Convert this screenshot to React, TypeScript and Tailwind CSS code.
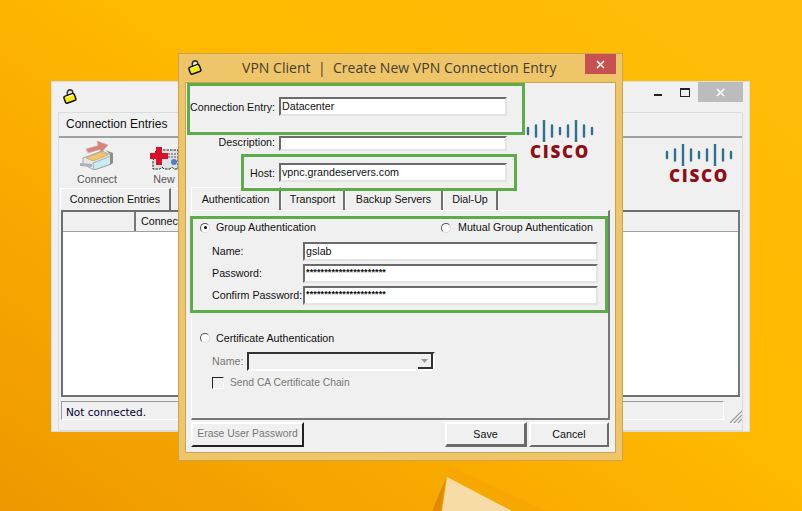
import React from "react";

const ui = "font-['Liberation_Sans',Arial,sans-serif] text-[10.7px] leading-none text-[#111] whitespace-nowrap";

function Lock() {
  return (
    <svg width="14" height="15" viewBox="0 0 14 15" className="shrink-0">
      <path d="M4.6 7 L4.2 3.8 Q4.6 1 7 0.8 Q9.4 0.8 9.8 3.4 L10.2 6" fill="#e8e8d8" stroke="#333" strokeWidth="1.5" />
      <rect x="1.4" y="5.6" width="11" height="7.4" rx="1.8" transform="rotate(-20 7 9.3)" fill="#f6ec14" stroke="#111" strokeWidth="1.5" />
      <path d="M3.4 8.2 L9.8 5.8" stroke="#fffbb0" strokeWidth="1.2" />
    </svg>
  );
}

function CiscoBars() {
  const h = [6, 11, 21, 11, 6, 11, 21, 11, 6];
  return (
    <svg width="68" height="22" viewBox="0 0 68 22">
      {h.map((v, i) => (
        <line key={i} x1={2 + i * 8} x2={2 + i * 8} y1={11 - v / 2} y2={11 + v / 2} stroke="#33708f" strokeWidth="2.4" strokeLinecap="round" />
      ))}
    </svg>
  );
}

function Cisco({ className = "" }: { className?: string }) {
  return (
    <div className={"flex w-[68px] flex-col items-center " + className}>
      <CiscoBars />
      <div className="mt-[1px] font-['Open_Sans',sans-serif] text-[17px] font-extrabold leading-[18px] tracking-[1.7px] text-[#8f0e16]">CISCO</div>
    </div>
  );
}

function ConnectIcon() {
  return (
    <svg width="34" height="30" viewBox="0 0 34 30">
      <path d="M6 9 L18 5.5 L17 1 L28 5 L21 13 L20 9.5 L8 13Z" fill="#d9827c" stroke="#c4b4b0" strokeWidth="0.6" />
      <path d="M3 18 L22 11 L31 15 L31 24 L14 30 L3 24Z" fill="#e6e6e6" stroke="#8a8a8a" strokeWidth="0.7" />
      <path d="M6 18 L21 12 L28 15 L13 21Z" fill="#f2c56d" stroke="#b09050" strokeWidth="0.5" />
      <path d="M13 23 L31 16 L31 24 L14 30Z" fill="#c8ecf2" stroke="#8a8a8a" strokeWidth="0.6" />
      <path d="M0 23 L12 24 L12 27 L0 26Z" fill="#b0b0bc" />
      <path d="M25 10 L33 13 L33 23 L30 25 L30 14Z" fill="#8f8f80" />
    </svg>
  );
}

function NewIcon() {
  return (
    <svg width="28" height="26" viewBox="0 0 28 26">
      <path d="M6 3 H28 V22 H24 Q22 19 20 22 H14 Q12 19 10 22 H3 V14Z" fill="#dfe3e6" stroke="#222" strokeWidth="1" strokeDasharray="2.5 1" />
      <path d="M15 7 H27 M15 10 H27" stroke="#555" strokeWidth="1" strokeDasharray="2 1" />
      <circle cx="24" cy="15" r="3" fill="#4f7fc4" />
      <path d="M6 0 H12 V6 H18 V12 H12 V18 H6 V12 H0 V6 H6Z" fill="#dc0f2a" />
    </svg>
  );
}

function Input({ value, className = "", mono = false }: { value?: string; className?: string; mono?: boolean }) {
  return (
    <div className={"flex items-center border-2 border-t-[#6b6b6b] border-l-[#6b6b6b] border-r-[#e4e4e4] border-b-[#e4e4e4] bg-white pl-[1px] " + className}>
      {mono ? <span className="-mt-[3px] text-[9px] font-bold leading-none tracking-[0.13px]">{value}</span> : value}
    </div>
  );
}

function Radio({ checked = false }: { checked?: boolean }) {
  return (
    <span className="relative block h-[10px] w-[10px] shrink-0 rounded-full border border-t-[#555] border-l-[#555] border-r-[#ddd] border-b-[#ddd] bg-white">
      {checked && <span className="absolute left-[2.5px] top-[2.5px] h-[3px] w-[3px] rounded-full bg-black" />}
    </span>
  );
}

function Tab({ label, active = false, w }: { label: string; active?: boolean; w: string }) {
  return (
    <div className={"flex items-center justify-center border-l border-t border-white border-r-2 border-r-[#6f6f6f] " + w + (active ? " -mt-[1px] h-[23px] bg-[#f0f0f0]" : " h-[22px]")}>
      {label}
    </div>
  );
}

function FieldRow({ label, value, mono = false }: { label: string; value: string; mono?: boolean }) {
  return (
    <div className="flex h-[19px] items-center">
      <div className="w-[91px]">{label}</div>
      <Input value={value} mono={mono} className="h-[19px] w-[295px]" />
    </div>
  );
}

function Btn({ label, className = "" }: { label: string; className?: string }) {
  return (
    <div className={"flex h-[25px] items-center justify-center border-2 border-t-white border-l-white border-r-[#6a6a6a] border-b-[#6a6a6a] " + className}>
      {label}
    </div>
  );
}

export default function App() {
  const stars = "**********************";
  return (
    <div className={"relative h-[511px] w-[802px] overflow-hidden bg-[linear-gradient(35deg,#ee9800_0%,#f8a900_30%,#ffb900_55%,#ffbd0a_100%)] " + ui}>
      {/* wallpaper fold */}
      <svg width="802" height="511" viewBox="0 0 802 511" className="absolute left-0 top-0">
        <path d="M449 466 L546 511 H436Z" fill="#f6a800" />
        <path d="M447 477 L512 511 H442Z" fill="#f8dca8" />
        <path d="M432 511 L446 478 L441 511Z" fill="#e08a00" />
      </svg>

      {/* back window */}
      <div className="absolute left-[51px] top-[81px] flex h-[351px] w-[699px] flex-col border border-[#dcdcdc] bg-[#f0f0f0]">
        <div className="flex h-[30px] shrink-0 items-start">
          <div className="ml-[11px] mt-[7px]"><Lock /></div>
          <div className="ml-auto mr-[6px] flex items-start">
            <span className="mr-[18px] mt-[12px] h-[2px] w-[8px] bg-[#222]" />
            <span className="mr-[8px] mt-[6px] h-[9px] w-[10px] border border-t-2 border-[#222]" />
            <span className="flex h-[20px] w-[45px] items-center justify-center bg-[#bcbcbc]">
              <svg width="9" height="9" viewBox="0 0 9 9"><path d="M1 1 L8 8 M8 1 L1 8" stroke="#fff" strokeWidth="1.6" /></svg>
            </span>
          </div>
        </div>
        <div className="mx-[6px] flex flex-1 flex-col border border-[#dcdcdc]">
          <div className="flex h-[25px] shrink-0 items-center border-b-[2px] border-[#a0a0a0] pb-[2px] pl-[7px] text-[12px]">Connection Entries</div>
          <div className="flex h-[50px] shrink-0 items-start justify-between pl-[13px] pr-[9px]">
            <div className="flex gap-[26px]">
              <div className="flex w-[50px] flex-col items-center pt-[2px] text-[#555]">
                <ConnectIcon />
                <span className="mt-[4px]">Connect</span>
              </div>
              <div className="flex w-[32px] flex-col items-center pt-[9px] text-[#555]">
                <NewIcon />
                <span className="mt-[1px]">New</span>
              </div>
            </div>
            <Cisco className="mt-[6px]" />
          </div>
          <div className="flex h-[22px] shrink-0 pl-[1px]">
            <div className="flex w-[111px] items-center justify-center border-l border-t border-white border-r-2 border-r-[#6f6f6f]">Connection Entries</div>
            <div className="w-[40px] border-r-2 border-t border-white border-r-[#6f6f6f]" />
          </div>
          <div className="mx-[2px] flex h-[187px] shrink-0 flex-col border-2 border-[#6f6f6f] border-r-[#777] bg-white">
            <div className="flex h-[20px] shrink-0 border-b border-[#a0a0a0] bg-[#f0f0f0]">
              <div className="w-[73px] border-r-2 border-[#777]" />
              <div className="flex flex-1 items-center pl-[5px]">Connection Entry</div>
            </div>
          </div>
          <div className="mt-[4px] flex h-[19px] pl-[2px]">
            <div className="flex flex-1 items-center border border-t-[#9a9a9a] border-l-[#9a9a9a] border-r-white border-b-white pl-[4px] pt-[3px] font-['DejaVu_Sans',sans-serif] text-[10.5px] text-[#000033]">Not connected.</div>
            <div className="relative w-[18px]">
              <svg width="13" height="13" viewBox="0 0 13 13" className="absolute bottom-[-3px] right-[0px]">
                <path d="M1 13 L13 1 M5 13 L13 5 M9 13 L13 9" stroke="#9a9a9a" strokeWidth="1.2" />
              </svg>
            </div>
          </div>
        </div>
      </div>

      {/* front dialog */}
      <div className="absolute left-[178px] top-[53px] flex h-[408px] w-[445px] flex-col border border-[#c9a253] bg-[#efc569]">
        <div className="relative flex h-[28px] shrink-0 items-start">
          <div className="ml-[9px] mt-[6px]"><Lock /></div>
          <div className="absolute left-[63px] top-[6px] whitespace-nowrap font-['Open_Sans',sans-serif] text-[14px] leading-[16px] tracking-[0.03px] text-[#463e2c]">VPN Client &nbsp;|&nbsp; Create New VPN Connection Entry</div>
          <div className="absolute right-[6px] top-0 flex h-[20px] w-[31px] items-center justify-center bg-[#c75050]">
            <svg width="9" height="9" viewBox="0 0 9 9"><path d="M1 1 L8 8 M8 1 L1 8" stroke="#fff" strokeWidth="1.6" /></svg>
          </div>
        </div>
        <div className="mx-[6px] flex h-[371px] flex-col border border-[#c9a253] bg-[#f0f0f0]">
          <div className="relative h-[105px] shrink-0">
            <div className="absolute right-[21px] top-[37px]"><Cisco /></div>
            <div className="flex pl-[4px] pt-[14px]">
              <div className="w-[85px] pt-[5px] text-right">Connection Entry:</div>
              <Input value="Datacenter" className="ml-[4px] h-[19px] w-[228px]" />
            </div>
            <div className="flex pl-[4px] pt-[20px]">
              <div className="w-[85px] pt-[1px] text-right">Description:</div>
              <Input className="ml-[4px] h-[15px] w-[228px]" />
            </div>
            <div className="flex pl-[4px] pt-[12px]">
              <div className="w-[85px] pt-[5px] text-right">Host:</div>
              <Input value="vpnc.grandeservers.com" className="ml-[4px] h-[19px] w-[228px]" />
            </div>
          </div>
          <div className="flex h-[22px] shrink-0 pl-[5px]">
            <Tab label="Authentication" active w="w-[90px]" />
            <Tab label="Transport" w="w-[64px]" />
            <Tab label="Backup Servers" w="w-[98px]" />
            <Tab label="Dial-Up" w="w-[55px]" />
          </div>
          <div className="mx-[5px] flex h-[210px] shrink-0 flex-col border-l border-t border-r-2 border-b-2 border-l-white border-t-white border-r-[#777] border-b-[#777] pl-[8px]">
            <div className="flex h-[31px] shrink-0 items-center pt-[2px]">
              <Radio checked />
              <span className="ml-[6px] w-[100px]">Group Authentication</span>
              <span className="ml-[125px]"><Radio /></span>
              <span className="ml-[7px]">Mutual Group Authentication</span>
            </div>
            <div className="flex flex-col gap-[3px] pl-[12px]">
              <FieldRow label="Name:" value="gslab" />
              <FieldRow label="Password:" value={stars} mono />
              <FieldRow label="Confirm Password:" value={stars} mono />
            </div>
            <div className="mt-[27px] flex h-[12px] items-center">
              <Radio />
              <span className="ml-[6px]">Certificate Authentication</span>
            </div>
            <div className="mt-[8px] flex h-[19px] items-center pl-[12px] text-[#777]">
              <span className="w-[35px]">Name:</span>
              <div className="flex h-[19px] w-[188px] items-center justify-end border-2 border-t-[#333] border-l-[#333] border-r-white border-b-white">
                <span className="flex h-[15px] w-[15px] items-center justify-center border-b-2 border-r-2 border-[#333] bg-[#f0f0f0]">
                  <svg width="7" height="4" viewBox="0 0 7 4"><path d="M0 0 H7 L3.5 4Z" fill="#999" /></svg>
                </span>
              </div>
            </div>
            <div className="mt-[6px] flex h-[12px] items-center pl-[12px] text-[#777]">
              <span className="h-[12px] w-[12px] border border-t-[#222] border-l-[#222] border-r-white border-b-white" />
              <span className="ml-[6px] text-[10.3px]">Send CA Certificate Chain</span>
            </div>
          </div>
          <div className="mt-[2px] flex pl-[5px] pr-[6px]">
            <Btn label="Erase User Password" className="w-[113px] text-[10.4px] text-[#777] border-r-[#222] border-b-[#222]" />
            <Btn label="Save" className="ml-auto w-[82px] border-t-[#666] border-l-[#666] border-b-[3px] border-r-[3px]" />
            <Btn label="Cancel" className="ml-[2px] w-[80px]" />
          </div>
        </div>
      </div>

      {/* annotation boxes */}
      <div className="absolute left-[187px] top-[83px] h-[52px] w-[338px] border-[3px] border-[#5cad4a]" />
      <div className="absolute left-[241px] top-[154px] h-[37px] w-[276px] border-[3px] border-[#5cad4a]" />
      <div className="absolute left-[190px] top-[216px] h-[97px] w-[418px] border-[3px] border-[#5cad4a]" />
    </div>
  );
}
